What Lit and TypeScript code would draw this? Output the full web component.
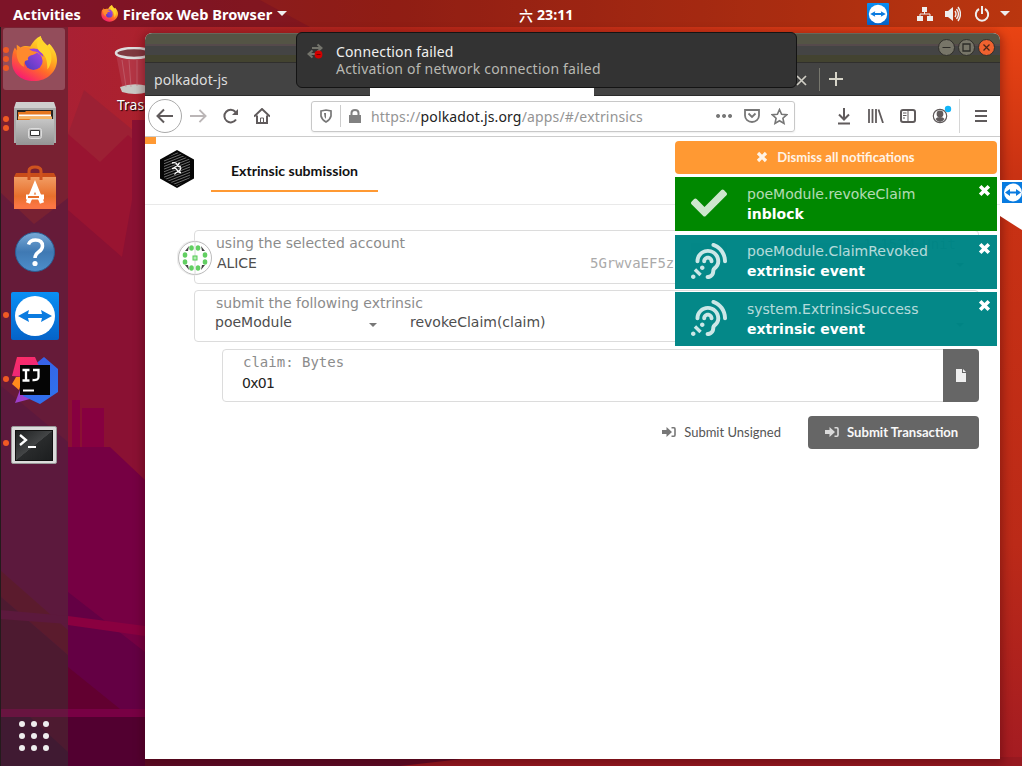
import { LitElement, html, css, svg } from "lit";
import { customElement, property } from "lit/decorators.js";

const EAR =
  "M216 260c0 15.464-12.536 28-28 28s-28-12.536-28-28c0-44.112 35.888-80 80-80s80 35.888 80 80c0 15.464-12.536 28-28 28s-28-12.536-28-28c0-13.234-10.767-24-24-24s-24 10.766-24 24zm24-176c-97.047 0-176 78.953-176 176 0 15.464 12.536 28 28 28s28-12.536 28-28c0-66.168 53.832-120 120-120s120 53.832 120 120c0 75.164-71.009 70.311-71.997 143.622L288 404c0 28.673-23.327 52-52 52-15.464 0-28 12.536-28 28s12.536 28 28 28c59.475 0 107.876-48.328 108-107.774.595-34.428 72-48.24 72-144.226 0-97.047-78.953-176-176-176zm-80 236c-17.673 0-32 14.327-32 32s14.327 32 32 32 32-14.327 32-32-14.327-32-32-32zM32 448c-17.673 0-32 14.327-32 32s14.327 32 32 32 32-14.327 32-32-14.327-32-32-32zm480-187.993c0-1.518-.012-3.025-.045-4.531C510.076 140.525 436.157 38.47 327.994 1.511c-14.633-4.998-30.549 2.809-35.55 17.442-5 14.633 2.81 30.549 17.442 35.55 85.906 29.354 144.61 110.513 146.077 201.953l.003.188c.026 1.118.033 2.236.033 3.363 0 15.464 12.536 28 28 28s28.001-12.536 28.001-28zM152.971 439.029l-80-80L39.03 392.97l80 80 33.941-33.941z";
const CHECK =
  "M173.898 439.404l-166.4-166.4c-9.997-9.997-9.997-26.206 0-36.204l36.203-36.204c9.997-9.998 26.207-9.998 36.204 0L192 312.69 432.095 72.596c9.997-9.997 26.207-9.997 36.204 0l36.203 36.204c9.997 9.997 9.997 26.206 0 36.204l-294.4 294.401c-9.998 9.997-26.207 9.997-36.204-.001z";

const firefox = (size: number) => html`<svg width=${size} height=${size} viewBox="0 0 48 48">
  <defs>
    <linearGradient id="fx" x1=".8" y1="0" x2=".2" y2="1">
      <stop offset="0" stop-color="#fff13a" /><stop offset=".35" stop-color="#ffb020" />
      <stop offset=".62" stop-color="#ff6a2a" /><stop offset="1" stop-color="#f7107c" />
    </linearGradient>
    <linearGradient id="fp" x1="1" y1="0" x2="0" y2="1">
      <stop offset="0" stop-color="#a845e0" /><stop offset="1" stop-color="#4b3bc0" />
    </linearGradient>
  </defs>
  <path fill="url(#fx)" d="M31 0c1 5 4 7 7 10l2-2c5 5 8 11 8 17 0 12-10 22-24 22S1 38 1 27c0-7 1-11 3-15l2 3V9l4 3c3-2 7-2 10-1 3-5 6-9 11-11z" />
  <circle cx="23.500" cy="26" r="9.500" fill="url(#fp)" />
  <path fill="#ff8a2d" d="M6 15c4-4 12-5 16-1l5 1c1 3-2 4-6 5-3 1-4 3-3 5-3 0-6 3-4 7-5-1-9-9-8-17z" />
  <path fill="#9a42dc" d="M19 14c7-3 14 1 15 8l-4-3c-2-2-4-3-7-3z" />
  <path fill="#ffd42b" d="M31 0c1 5 4 7 8 12 5 7 4 17-1 23 0-10-2-15-7-18-5-4-5-11 0-17z" />
</svg>`;

const teamviewer = (size: number) => html`<svg width=${size} height=${size} viewBox="0 0 48 48">
  <defs><linearGradient id="tv" x2="0" y2="1"><stop offset="0" stop-color="#0a8ff4" /><stop offset="1" stop-color="#0563c8" /></linearGradient></defs>
  <rect width="48" height="48" rx="2" fill="url(#tv)" />
  <circle cx="24" cy="24" r="20" fill="#fff" />
  <path fill="#0a7be0" d="M7 24l11-6-1 4h14l-1-4 11 6-11 6 1-4H17l1 4z" />
</svg>`;

const files = html`<svg width="44" height="46" viewBox="0 0 44 46">
  <defs><linearGradient id="fg" x2="0" y2="1"><stop offset="0" stop-color="#c6c6c6" /><stop offset="1" stop-color="#949494" /></linearGradient></defs>
  <path fill="#cfcfcf" d="M3 1h38l2 6v35H1V7z" /><path fill="#aaa" d="M1 7h42v35H1z" />
  <path fill="#292421" d="M4 9h36v11H4z" />
  <path fill="#e57720" d="M5 11h7l1-1h25v10H5z" /><path fill="#fff" d="M6 13.500h32v2H6z" /><path fill="#f7b564" d="M5 15.500h34V18H5z" />
  <path fill="url(#fg)" d="M3 19h13l2-1h23v26H3z" />
  <rect x="15.500" y="27.500" width="13" height="10" rx="2" fill="#bbb" stroke="#ddd" /><path d="M17.500 29.500h9v5h-9z" fill="#fff" stroke="#333" />
</svg>`;

const software = html`<svg width="44" height="46" viewBox="0 0 44 46">
  <defs><linearGradient id="sg" x2="0" y2="1"><stop offset="0" stop-color="#f19c63" /><stop offset=".6" stop-color="#e8702c" /><stop offset=".9" stop-color="#fb7643" /></linearGradient></defs>
  <path fill="#c94c19" d="M3 8h38l2 4H1z" /><path fill="url(#sg)" d="M1 12h42v32H1z" />
  <path d="M16 15V6q0-4 6-4t6 4v9" fill="none" stroke="#cf531f" stroke-width="3" />
  <path d="M15 38l7-17 7 17" fill="none" stroke="#fff" stroke-width="4.500" />
  <path d="M13 32h18" stroke="#fff" stroke-width="5" /><path d="M15 32h11" stroke="#e8702c" stroke-width="2" />
</svg>`;

const help = html`<svg width="42" height="42" viewBox="0 0 42 42">
  <defs><linearGradient id="hg" x2="0" y2="1"><stop offset="0" stop-color="#79aad7" /><stop offset=".5" stop-color="#3f79b3" /><stop offset="1" stop-color="#4e8fcb" /></linearGradient></defs>
  <circle cx="21" cy="21" r="19.500" fill="url(#hg)" stroke="#2c5d92" />
  <path d="M14.500 13.500q1.500-4.500 7-4.500 7 0 7 6 0 3.500-4 6-3.500 2.500-3.500 6" fill="none" stroke="#fff" stroke-width="3.500" /><circle cx="21" cy="32.500" r="2.600" fill="#fff" />
</svg>`;

const idea = html`<svg width="48" height="48" viewBox="0 0 48 48">
  <defs><linearGradient id="ib" x2=".7" y2="1"><stop offset="0" stop-color="#3b5be8" /><stop offset="1" stop-color="#2f72ec" /></linearGradient>
  <linearGradient id="ip" x2=".6" y2="1"><stop offset="0" stop-color="#ff2e63" /><stop offset="1" stop-color="#e7267f" /></linearGradient></defs>
  <path fill="#ff8a1d" d="M5 21L1 28l7 6 4-13z" /><path fill="#9c3fc9" d="M4 47l6-16 20 9z" />
  <path fill="url(#ib)" d="M22 10L33 1l14 12v23L29 48 12 40z" /><path fill="url(#ip)" d="M6 1h18l4 9-2 12L1 20z" />
  <path fill="#050505" d="M9 9h30v30H9z" />
  <path d="M11.500 14h7M15 14v10.500M11.500 24.500h7M22 14h5.500v7q0 3.500-6 3" fill="none" stroke="#fff" stroke-width="2.300" /><path fill="#fff" d="M12 33.500h11v2H12z" />
</svg>`;

const terminal = html`<svg width="46" height="38" viewBox="0 0 46 38" style="margin:3px 0 0 -1px">
  <defs><linearGradient id="tg" x2="1" y2="1"><stop offset="0" stop-color="#1f2122" /><stop offset=".5" stop-color="#434546" /><stop offset=".51" stop-color="#292b2c" /><stop offset="1" stop-color="#1c1e1f" /></linearGradient></defs>
  <rect x=".5" y=".5" width="45" height="37" rx="1.500" fill="#dcdcdc" stroke="#999" /><path fill="#111" d="M4 4h38v31H4z" /><path fill="url(#tg)" d="M5 5h36v29H5z" />
  <path d="M9 9l6 5-6 5" fill="none" stroke="#fff" stroke-width="2.300" /><path fill="#fff" d="M17 20h8v2h-8z" />
</svg>`;

const cross = (size: number) =>
  html`<svg width=${size} height=${size} viewBox="0 0 12 12"><path d="M2 2l8 8M10 2l-8 8" stroke="currentColor" stroke-width="3.300" /></svg>`;

const signIn = html`<svg width="14" height="12" viewBox="0 0 14 12">
  <path fill="currentColor" fill-opacity=".8" d="M0 4h4.500V1l5.500 5-5.500 5V8H0z" /><path d="M9.500 1.700H12q1 0 1 1.200v6.200q0 1.200-1 1.200H9.500" fill="none" stroke="currentColor" stroke-opacity=".8" stroke-width="1.600" />
</svg>`;

@customElement("note-card")
export class NoteCard extends LitElement {
  @property() label = "";
  @property() status = "";
  @property() kind = "event";
  static styles = css`
    :host { display: block; height: 54px; }
    .card { height: 54px; display: flex; background: rgba(0, 134, 134, .985); color: #fff; font-family: "DejaVu Sans", sans-serif; font-size: 14px; }
    .inblock { background: #008800; }
    .icon { width: 72px; padding: 8px 0 0 16px; box-sizing: border-box; opacity: .8; }
    .icon svg { display: block; }
    .copy { flex: 1; padding-top: var(--copy-top, 7px); line-height: 20px; white-space: nowrap; }
    .label { opacity: .7; }
    .status { font-weight: bold; }
    .close { padding: 7px 6px 0 0; }
    .close svg { display: block; }
  `;
  render() {
    return html`<div class="card ${this.kind}">
      <div class="icon"><svg width="36" height="36" viewBox="0 0 512 512"><path fill="#fff" d=${this.kind === "inblock" ? CHECK : EAR} /></svg></div>
      <div class="copy"><div class="label">${this.label}</div><div class="status">${this.status}</div></div>
      <div class="close">${cross(13)}</div>
    </div>`;
  }
}

@customElement("app-root")
export class AppRoot extends LitElement {
  static styles = css`
    :host { display: block; width: 1022px; height: 766px; font-family: "Noto Sans", sans-serif; }
    * { box-sizing: border-box; }
    svg { display: block; flex: none; }
    .screen { position: relative; width: 1022px; height: 766px; overflow: hidden; display: flex; flex-direction: column; white-space: nowrap; }
    .wall { position: absolute; inset: 0; }
    .topbar { position: relative; height: 27px; background: rgba(0,0,0,.2); color: #fff; font-size: 14.200px; font-weight: 700; display: flex; align-items: center; }
    .tl { display: flex; align-items: center; padding-left: 13px; width: 519px; }
    .tl svg { margin: 0 5px 0 20px; }
    .tri { border: 5px solid transparent; border-top-color: #eee; border-bottom: 0; width: 0; }
    .tl .tri { margin-left: 5px; }
    .act, .app { font-size: 14.600px; }
    .clock { display: flex; gap: 4px; align-items: center; padding-top: 2px; }
    .han { font-family: "Noto Sans CJK SC", sans-serif; font-size: 14px; line-height: 20px; font-weight: 500; }
    .tr { flex: 1; display: flex; align-items: center; justify-content: flex-end; padding-right: 12px; }
    .main { position: relative; flex: 1; display: flex; }
    .dock { width: 68px; background: rgba(80,50,60,.4); display: flex; flex-direction: column; border-left: 1px solid #241a1c; }
    .item { height: 64px; display: flex; align-items: center; position: relative; padding: 1px 0 0 1px; }
    .item .box { width: 65px; display: flex; justify-content: center; }
    .dots { position: absolute; left: 2px; top: 0; bottom: 0; display: flex; flex-direction: column; justify-content: center; gap: 3px; }
    .dots i { width: 6px; height: 6px; border-radius: 50%; background: #f05a24; }
    .active { padding: 0 0 0 2px; }
    .active .box { background: rgba(255,255,255,.2); border-radius: 3px; height: 62px; align-items: center; width: 62px; }
    .grid { margin: auto 0 15px 18px; width: 30px; display: grid; grid-template-columns: repeat(3, 6px); gap: 6px; }
    .grid i { height: 6px; border-radius: 50%; background: #eee; }
    .trash { padding: 20px 0 0 46px; color: #fff; font-size: 14px; }
    .trash span { display: block; margin: 1px 0 0 3px; text-shadow: 1px 1px 1px #000; line-height: 18px; }
    .window { position: absolute; left: 145px; top: 33px; width: 855px; height: 726px; background: #fff; border-radius: 7px 7px 0 0; overflow: hidden; display: flex; flex-direction: column; box-shadow: 0 2px 8px 3px rgba(60,0,10,.35); }
    .title { height: 30px; background: linear-gradient(#67665a 0 1px, #545445 1px 11px, #554a4b 11px 13px, #444 13px 22px, #434330 22px 29px, #302f2d 29px); display: flex; justify-content: flex-end; gap: 3px; padding: 6px 5px 0 0; }
    .tabs { height: 33px; background: #434343; display: flex; color: #ddd; font-size: 14px; border-bottom: 1px solid #2c2c2c; }
    .tabs .t1 { width: 225px; padding: 7px 0 0 9px; line-height: 20px; letter-spacing: .08px; }
    .tabs .t2 { width: 224px; height: 33px; background: #fff; }
    .tabs .t3 { width: 226px; display: flex; justify-content: flex-end; padding: 7px 12px 0 0; border-right: 1px solid #77776e; height: 23px; margin-top: 5px; }
    .tabs .plus { margin: 9px 0 0 9px; }
    .tools { height: 41px; display: flex; align-items: center; border-bottom: 1px solid #ccc; padding-left: 3px; color: #605b5c; }
    .back { width: 34px; height: 34px; border: 1px solid #aaa; border-radius: 50%; display: flex; align-items: center; justify-content: center; }
    .url { width: 484px; height: 31px; margin-left: 41px; border: 1px solid #c8c8c8; border-radius: 3px; display: flex; align-items: center; color: #949494; font-size: 14px; box-shadow: 0 1px 2px #eee; padding-left: 8px; }
    .url .sep { width: 1px; height: 22px; background: #ccc; margin: 0 8px 0 7px; }
    .url .addr { flex: 1; padding-left: 10px; letter-spacing: .16px; } .url b { font-weight: 400; color: #222; }
    .page { flex: 1; position: relative; color: #4e4e4e; font: 14px "DejaVu Sans", sans-serif; }
    .progress { position: absolute; left: 0; top: 0; width: 11px; height: 7px; background: #ff9933; }
    .head { height: 68px; border-bottom: 1px solid #e9e9e9; display: flex; padding-left: 15px; }
    .head svg { margin-top: 13px; }
    .navtab { margin: 15px 0 0 17px; width: 167px; height: 40px; border-bottom: 2px solid #ff9933; font: bold 14.100px/38px Lato, sans-serif; color: #111; text-align: center; }
    .form { padding: 25px 21px 0 49px; display: flex; flex-direction: column; }
    .field { border: 1px solid #dcdcdc; border-radius: 4px; position: relative; }
    .lab { color: #8c8c8c; line-height: 16px; }
    .acct { height: 54px; padding: 4px 0 0 21px; }
    .acct .row { display: flex; line-height: 16px; margin-top: 4px; padding-left: 1px; }
    .acct .row span:first-child { width: 373px; letter-spacing: -.1px; }
    .mono { font-family: "DejaVu Sans Mono", monospace; color: #aaa; }
    .bal { position: absolute; right: 22px; top: 5px; font-family: "DejaVu Sans Mono", monospace; line-height: 16px; }
    .field .drop { position: absolute; right: 14px; border-width: 4px; border-bottom: 0; border-top-color: #333; }
    .acct .drop { top: 32px; } .ext .drop { top: 32px; }
    .ident { position: absolute; left: -18px; top: 9px; }
    .ext { height: 52px; margin-top: 6px; padding: 4px 0 0 21px; }
    .ext .row { display: flex; align-items: center; line-height: 16px; margin: 3px 0 0 -1px; }
    .ext .row span:first-child { width: 154px; }
    .ext .row .tri { border-width: 4px; border-bottom: 0; border-top-color: #777; margin: 5px 33px 0 0; }
    .claim { height: 53px; margin: 7px 0 0 28px; display: flex; }
    .claim .copy { flex: 1; padding: 4px 0 0 20px; }
    .claim .lab { font-family: "DejaVu Sans Mono", monospace; }
    .claim .val { color: #222; margin: 5px 0 0 -1px; line-height: 16px; letter-spacing: -.7px; }
    .file { width: 36px; margin: -1px -1px -1px 0; background: #666; border-radius: 0 4px 4px 0; display: flex; align-items: center; justify-content: center; }
    .btns { display: flex; justify-content: flex-end; margin-top: 14px; font: 13px Lato, sans-serif; }
    .btn { height: 33px; display: flex; align-items: center; gap: 8px; color: #555; border-radius: 4px; padding-bottom: 1px; }
    .plain { margin-right: 27px; }
    .solid { width: 171px; background: #666; color: #f8f8f8; font-weight: bold; padding-left: 17px; font-size: 13.100px; }
    .notes { position: absolute; left: 530px; top: 4px; width: 322px; display: flex; flex-direction: column; }
    .dismiss { height: 33px; border-radius: 4px; background: #ff9933; color: #fff3e6; font: bold 13.100px Lato, sans-serif; display: flex; align-items: center; justify-content: center; gap: 9px; margin-bottom: 3px; padding: 0 1px 2px 0; }
    .n1 { margin-bottom: 4px; } .n2 { margin-bottom: 3px; --copy-top: 6px; }
    .toast { position: absolute; left: 296px; top: 32px; width: 501px; height: 56px; border: 1px solid #141414; border-radius: 6px; background: #333; display: flex; padding: 10px 0 0 10px; font-size: 14px; line-height: 17px; }
    .toast .ic { width: 29px; } .toast .a { color: #f0f0ee; letter-spacing: .15px; } .toast .b { color: #b8b8b2; letter-spacing: .21px; }
    .side { position: absolute; left: 1000px; top: 180px; }
  `;

  private wallpaper = html`<svg class="wall" width="1022" height="766">
    <defs>
      <linearGradient id="w1" gradientUnits="userSpaceOnUse" x1="60" x2="1022" y1="0" y2="0"><stop offset="0" stop-color="#a92034" /><stop offset=".35" stop-color="#b42519" /><stop offset="1" stop-color="#e94413" /></linearGradient>
      <linearGradient id="w2" x2="0" y2="1"><stop offset="0" stop-color="#e94413" /><stop offset=".2" stop-color="#c93213" /><stop offset=".7" stop-color="#bb2a18" /><stop offset="1" stop-color="#a31b22" /></linearGradient>
    </defs>
    <rect width="1022" height="766" fill="url(#w1)" />
    <path fill="#9c2034" d="M84 90L145 140V205H68V134z" /><path fill="#991431" d="M68 134L100 162 128 135 145 150V766H68z" /><path fill="#8a1133" d="M68 210L122 257 132 200V120H145V766H68z" />
    <path fill="#93162c" d="M0 27H68V450H0z" />
    <path fill="#760c38" d="M0 192L34 224 68 198V450H0z" />
    <path fill="#65093e" d="M0 385L68 442V766H0z" />
    <path fill="#760043" d="M68 447H110L145 480V766H68z" /><path fill="#870040" d="M72 400h8v47h-8zM82 408h22v39H82z" />
    <path fill="#640044" d="M68 592L145 652V766H68z" />
    <path fill="#630d24" d="M0 570L68 630V655L0 596z" /><path fill="#4c0b28" d="M0 596L68 655V766H0z" />
    <path fill="#620030" d="M68 667L120 709H145V766H68z" />
    <path fill="#65093e" d="M0 610L68 616V624L0 619z" /><path fill="#8a0040" d="M68 616L145 626V636L68 625z" />
    <path fill="#520030" d="M68 717H145V766H68z" /><path fill="#360a2c" d="M0 717H30L68 752V766H0z" /><path fill="#780044" d="M0 709H145V717H0z" />
    <path fill="#8f1230" d="M0 0H260L310 27H0z" opacity=".4" />
    <rect x="1000" y="27" width="22" height="739" fill="url(#w2)" />
    <rect x="145" y="759" width="877" height="7" fill="#5d0b26" />
    <path fill="#971920" d="M400 766L480 757H1022V766z" />
  </svg>`;

  private dockItem(icon: unknown, dots: number, active = false) {
    return html`<div class="item ${active ? "active" : ""}">
      <div class="dots">${Array.from({ length: dots }, () => html`<i></i>`)}</div><div class="box">${icon}</div>
    </div>`;
  }

  private winBtn(fill: string, glyph: unknown) {
    return html`<svg width="17" height="17" viewBox="0 0 17 17"><circle cx="8.500" cy="8.500" r="8" fill=${fill} stroke="#302f2b" />${glyph}</svg>`;
  }

  private hexLogo() {
    const lines = Array.from({ length: 15 }, (_, i) => svg`<path d=${`M3 ${6 + i * 2.7}L31 ${-5 + i * 2.7}`} stroke="#999" stroke-width=".7" />`);
    return html`<svg width="34" height="38" viewBox="0 0 34 38">
      <clipPath id="hx"><path d="M17 2l13 8v18l-13 8-13-8V10z" /></clipPath>
      <path fill="#060606" d="M17 0l17 9.500v19L17 38 0 28.500v-19z" /><g clip-path="url(#hx)">${lines}</g>
      <path d="M12 13q4-1 5 1.500T21 17M12 18.500q4-1 5 1.500t4 2.500M19.500 12.500q-1 3-3.500 4t-3 2.500M21 18q-1 3-3.500 4t-3 2.500" fill="none" stroke="#fff" stroke-width="1.300" />
    </svg>`;
  }

  private identicon() {
    const pts = [[14.500, 8], [21, 8], [8, 15], [8, 22], [28, 15], [28, 22], [14.500, 28], [21, 28]];
    return html`<svg class="ident" width="36" height="36" viewBox="0 0 36 36">
      <circle cx="17" cy="18" r="17.500" fill="#eee" /><circle cx="18" cy="18" r="16.500" fill="#fff" stroke="#bdbdbd" />
      <path d="M18 1v34" stroke="#d8d8d8" />
      <path fill="#444" d="M8 11l4-5-1 5zM28 11l-4-5 1 5zM8 25l4 5-1-5zM28 25l-4 5 1-5z" />
      ${pts.map(([x, y]) => svg`<ellipse cx=${x} cy=${y} rx="2.300" ry="2.800" fill="#62cf62" />`)}
      <rect x="16" y="16" width="4" height="4" fill="#b4eab4" stroke="#55cc55" />
    </svg>`;
  }

  render() {
    return html`<div class="screen">
      ${this.wallpaper}
      <div class="topbar">
        <div class="tl"><span class="act">Activities</span>${firefox(17)}<span class="app">Firefox Web Browser</span><i class="tri"></i></div>
        <div class="clock"><span class="han">六</span><span>23:11</span></div>
        <div class="tr">
          ${teamviewer(22)}
          <svg width="16" height="16" viewBox="0 0 16 16" style="margin-left:28px"><path fill="#eee" d="M5 1h5v5H5zM0 10h6v5H0zM10 10h6v5h-6z" /><path d="M7.500 6v2M3 10V8h10v2" fill="none" stroke="#eee" /></svg>
          <svg width="16" height="16" viewBox="0 0 16 16" style="margin-left:12px"><path fill="#eee" d="M0 5h3l5-4v14l-5-4H0z" /><path d="M10 5q2 3 0 6M11.500 3q4 5 0 10M13 1q5 7 0 14" fill="none" stroke="#eee" stroke-width="1.400" /></svg>
          <svg width="16" height="16" viewBox="0 0 16 16" style="margin-left:13px"><path d="M5 3a6.200 6.200 0 1 0 6 0M8 0v8" fill="none" stroke="#eee" stroke-width="2" /></svg>
          <i class="tri" style="margin-left:10px"></i>
        </div>
      </div>
      <div class="main">
        <div class="dock">
          ${this.dockItem(firefox(46), 3, true)} ${this.dockItem(files, 2)} ${this.dockItem(software, 0)}
          ${this.dockItem(help, 0)} ${this.dockItem(teamviewer(48), 1)} ${this.dockItem(idea, 1)} ${this.dockItem(terminal, 1)}
          <div class="grid">${Array.from({ length: 9 }, () => html`<i></i>`)}</div>
        </div>
        <div class="trash">
          <svg width="34" height="48" viewBox="0 0 34 48">
            <path fill="#b53c4c" fill-opacity=".75" d="M2 7h32v37q-10 5-25 0z" /><path fill="#c8c8c4" d="M6 40q13-5 28-1v6q-13 4-26 0z" />
            <path d="M8 13l4 27M15 13l2 27M23 13v26" stroke="#c77783" stroke-opacity=".5" />
            <ellipse cx="20" cy="6" rx="18" ry="5" fill="#7f3940" stroke="#ddd" stroke-width="2.500" />
          </svg><span>Trash</span>
        </div>
      </div>
      <div class="window">
        <div class="title">
          ${this.winBtn("#777568", svg`<path d="M4.500 8.500h8" stroke="#2d2c28" />`)}
          ${this.winBtn("#777568", svg`<path d="M5 5h7v7H5z" fill="none" stroke="#2d2c28" stroke-width="1.300" />`)}
          ${this.winBtn("#f0622f", svg`<path d="M5.500 5.500l6 6M11.500 5.500l-6 6" stroke="#4c2618" stroke-width="1.300" />`)}
        </div>
        <div class="tabs">
          <div class="t1">polkadot-js</div><div class="t2"></div>
          <div class="t3"><svg width="11" height="11" viewBox="0 0 11 11"><path d="M1 1l9 9M10 1l-9 9" stroke="#d0cec5" stroke-width="1.700" /></svg></div>
          <svg class="plus" width="15" height="15" viewBox="0 0 15 15"><path d="M7 0v14M0 7h14" stroke="#d6d4c8" stroke-width="2" /></svg>
        </div>
        <div class="tools">
          <div class="back"><svg width="18" height="16" viewBox="0 0 18 16"><path d="M17 8H2M8 1.500L1.500 8 8 14.500" fill="none" stroke="currentColor" stroke-width="2" /></svg></div>
          <svg width="17" height="16" viewBox="0 0 18 16" style="margin-left:8px"><path d="M0 8h16M10 1.500L16.500 8 10 14.500" fill="none" stroke="#bbb6b7" stroke-width="2" /></svg>
          <svg width="16" height="16" viewBox="0 0 16 16" style="margin-left:16px"><path d="M13 11.500A6.300 6.300 0 1 1 12.500 4" fill="none" stroke="currentColor" stroke-width="2" /><path fill="currentColor" d="M15 1v6H9z" /></svg>
          <svg width="16" height="16" viewBox="0 0 16 16" style="margin-left:15px"><path d="M0 8.500L8 1l8 7.500M3 7.500V15h10V7.500" fill="none" stroke="currentColor" stroke-width="2" /><path d="M6.500 15v-5h3v5" fill="none" stroke="currentColor" /></svg>
          <div class="url">
            <svg width="12" height="14" viewBox="0 0 12 14"><path d="M1 2l5-1 5 1v5q-1 4-5 6-4-2-5-6z" fill="none" stroke="#777" stroke-width="1.700" /><path d="M6 4v6q-2-2-2-6z" fill="#777" /></svg>
            <div class="sep" style="margin-left:8px"></div>
            <svg width="12" height="14" viewBox="0 0 12 14"><path fill="#818181" d="M0 6h12v8H0z" /><path d="M2.500 7V4q0-3 3.500-3t3.500 3v3" fill="none" stroke="#818181" stroke-width="2" /></svg>
            <div class="addr">https://<b>polkadot.js.org</b>/apps/#/extrinsics</div>
            <svg width="16" height="4" viewBox="0 0 16 4"><path d="M2 0a2 2 0 1 0 .1 0M8 0a2 2 0 1 0 .1 0M14 0a2 2 0 1 0 .1 0" fill="#777" /></svg>
            <svg width="16" height="14" viewBox="0 0 16 14" style="margin-left:12px"><path d="M1 1h14v5.500a7 6.500 0 0 1-14 0zM4.500 4.500L8 8l3.500-3.500" fill="none" stroke="#777" stroke-width="1.800" /></svg>
            <svg width="17" height="17" viewBox="0 0 17 17" style="margin:0 6px 0 11px"><path d="M8.500 1.500l2.100 4.800 5.200.4-3.900 3.500 1.100 5.200-4.500-2.700L4 15.400l1.100-5.200-3.900-3.500 5.200-.4z" fill="none" stroke="#777" stroke-width="1.600" /></svg>
          </div>
          <svg width="14" height="17" viewBox="0 0 14 17" style="margin-left:42px"><path d="M7 0v11M2 6.500l5 5 5-5M1 15.500h12" fill="none" stroke="currentColor" stroke-width="2" /></svg>
          <svg width="16" height="14" viewBox="0 0 16 14" style="margin-left:17px"><path d="M1 0v14M4.500 0v14M8 0v14M10.500.5L15 14" fill="none" stroke="currentColor" stroke-width="1.800" /></svg>
          <svg width="16" height="14" viewBox="0 0 16 14" style="margin-left:16px"><rect x="1" y="1" width="14" height="12" rx="2" fill="none" stroke="currentColor" stroke-width="2" /><path d="M8 1v12M3 4h3.500M3 6.500h3.500M3 9h2" stroke="currentColor" /></svg>
          <svg width="20" height="22" viewBox="0 0 20 22" style="margin-left:16px"><circle cx="8" cy="11" r="6.700" fill="none" stroke="currentColor" stroke-width="1.200" /><circle cx="8" cy="9" r="3.400" fill="currentColor" /><path fill="currentColor" d="M3.500 14q1-2 4.500-2t4.500 2q-2 3-4.500 3t-4.500-3z" /><circle cx="16" cy="4" r="3.200" fill="#12b5f8" /></svg>
          <div style="width:1px;height:34px;background:#d6d6d6;margin:0 15px 0 7px"></div>
          <svg width="12" height="12" viewBox="0 0 12 12"><path d="M0 1h12M0 6h12M0 11h12" stroke="currentColor" stroke-width="2" /></svg>
        </div>
        <div class="page">
          <div class="progress"></div>
          <div class="head">${this.hexLogo()}<div class="navtab">Extrinsic submission</div></div>
          <div class="form">
            <div class="field acct">${this.identicon()}<div class="lab">using the selected account</div>
              <div class="row"><span>ALICE</span><span class="mono">5GrwvaEF5z</span></div><span class="bal">1.152M Unit</span><i class="tri drop"></i></div>
            <div class="field ext"><div class="lab">submit the following extrinsic</div>
              <div class="row"><span>poeModule</span><i class="tri"></i><span>revokeClaim(claim)</span></div><i class="tri drop"></i></div>
            <div class="field claim"><div class="copy"><div class="lab">claim: Bytes</div><div class="val">0x01</div></div>
              <div class="file"><svg width="10" height="13" viewBox="0 0 10 13"><path fill="#eee" d="M0 0h6v4h4v9H0z" /><path fill="#eee" d="M7 0l3 3H7z" /></svg></div></div>
            <div class="btns"><div class="btn plain">${signIn}<span>Submit Unsigned</span></div><div class="btn solid">${signIn}<span>Submit Transaction</span></div></div>
          </div>
          <div class="notes">
            <div class="dismiss">${cross(12)}<span>Dismiss all notifications</span></div>
            <note-card class="n1" kind="inblock" label="poeModule.revokeClaim" status="inblock"></note-card>
            <note-card class="n2" label="poeModule.ClaimRevoked" status="extrinsic event"></note-card>
            <note-card label="system.ExtrinsicSuccess" status="extrinsic event"></note-card>
          </div>
        </div>
      </div>
      <div class="toast">
        <div class="ic"><svg width="16" height="17" viewBox="0 0 16 17"><path d="M5 5h8M10.500 1.500L14.500 5l-4 3.500M11 11H3M5.500 7.500l-4 3.500 4 3.500" fill="none" stroke="#74746c" stroke-width="2" /><circle cx="11.500" cy="11.500" r="3.900" fill="#d40000" /><path d="M9.500 11.500h4" stroke="#700" /></svg></div>
        <div><div class="a">Connection failed</div><div class="b">Activation of network connection failed</div></div>
      </div>
      <svg class="side" width="22" height="52" viewBox="0 0 22 52"><path fill="#fff" d="M0 0h22v50L0 36z" /><rect x="2" y="2" width="22" height="21" fill="#087be0" /><circle cx="13" cy="12.500" r="9" fill="#fff" /><path fill="#0a7be0" d="M5 12.500l5-3.500v2.500h6V9l5 3.500-5 3.500v-2.500h-6V16z" /></svg>
    </div>`;
  }
}
